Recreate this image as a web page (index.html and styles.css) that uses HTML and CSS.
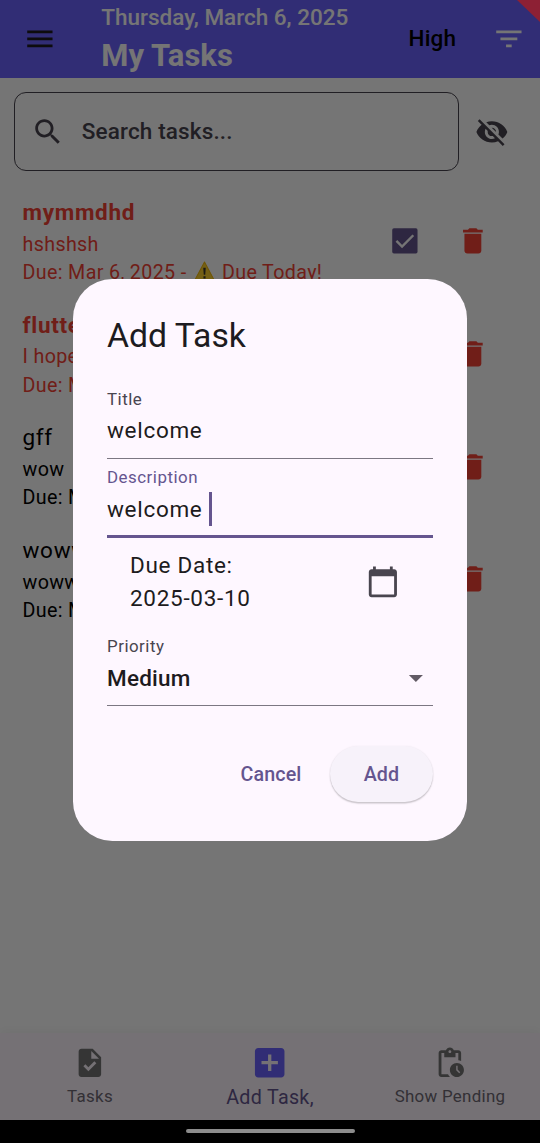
FILE: index.html
```html
<!DOCTYPE html>
<html lang="en">
<head>
<meta charset="utf-8">
<title>My Tasks</title>
<link rel="stylesheet" href="styles.css">
</head>
<body>
<svg class="defs" width="0" height="0">
  <symbol id="trash" viewBox="0 0 24 24"><path d="M6 19c0 1.1.9 2 2 2h8c1.1 0 2-.9 2-2V7H6v12zM19 4h-3.500l-1-1h-5l-1 1H5v2h14V4z"/></symbol>
</svg>
<div class="screen">
  <header class="appbar">
    <svg class="icon menu" viewBox="0 0 24 24"><path d="M3 18h18v-2H3v2zm0-5h18v-2H3v2zm0-7v2h18V6H3z"/></svg>
    <div class="heading">
      <div class="date">Thursday, March 6, 2025</div>
      <h1 class="app-title">My Tasks</h1>
    </div>
    <span class="filter-label">High</span>
    <svg class="icon filter" viewBox="0 0 24 24"><path d="M10 18h4v-2h-4v2zM3 6v2h18V6H3zm3 7h12v-2H6v2z"/></svg>
  </header>
  <div class="search-row">
    <div class="search">
      <svg class="icon" viewBox="0 0 24 24"><path d="M15.500 14h-.79l-.28-.27C15.410 12.590 16 11.110 16 9.500 16 5.910 13.090 3 9.500 3S3 5.910 3 9.500 5.910 16 9.500 16c1.610 0 3.090-.59 4.230-1.570l.27.28v.79l5 4.990L20.490 19l-4.990-5zm-6 0C7.010 14 5 11.990 5 9.500S7.010 5 9.500 5 14 7.010 14 9.500 11.990 14 9.500 14z"/></svg>
      <span>Search tasks...</span>
    </div>
    <svg class="icon" viewBox="0 0 24 24"><path d="M12 7c2.760 0 5 2.240 5 5 0 .65-.13 1.260-.36 1.830l2.920 2.920c1.510-1.260 2.700-2.890 3.430-4.750-1.730-4.390-6-7.500-11-7.500-1.400 0-2.740.25-3.980.7l2.160 2.160C10.740 7.130 11.350 7 12 7zM2 4.270l2.280 2.280.46.46C3.080 8.300 1.780 10.020 1 12c1.730 4.390 6 7.500 11 7.500 1.550 0 3.030-.3 4.380-.84l.42.42L19.730 22 21 20.730 3.270 3 2 4.270zM7.530 9.800l1.550 1.550c-.05.21-.08.43-.08.65 0 1.660 1.340 3 3 3 .22 0 .44-.03.65-.08l1.550 1.550c-.67.33-1.410.53-2.200.53-2.760 0-5-2.240-5-5 0-.79.2-1.530.53-2.200zm4.310-.78l3.150 3.150.02-.16c0-1.660-1.340-3-3-3l-.17.01z"/></svg>
  </div>
  <main class="tasks">
    <article class="task due">
      <div class="task-text">
        <h2>mymmdhd</h2>
        <p>hshshsh</p>
        <p>Due: Mar 6, 2025 - <svg class="warning" viewBox="0 0 20 20"><path d="M10 1 19.500 18.800H.5z" fill="#fdd12f" stroke="#f2b90c" stroke-linejoin="round"/><path d="M8.800 6.500h2.400l-.5 6.500H9.300zM9 14.500h2v2.200H9z" fill="#3c382c"/></svg> Due Today!</p>
      </div>
      <svg class="icon check" viewBox="0 0 24 24"><rect x="3" y="3" width="18" height="18" rx="1.200" fill="#65558f"/><path d="M6 12l4 4 8-8" fill="none" stroke="#fff" stroke-width="1.700"/></svg>
      <svg class="icon trash"><use href="#trash"/></svg>
    </article>
    <article class="task due">
      <div class="task-text"><h2>flutte</h2><p>I hope</p><p>Due: M</p></div>
      <svg class="icon trash"><use href="#trash"/></svg>
    </article>
    <article class="task">
      <div class="task-text"><h2>gff</h2><p>wow</p><p>Due: M</p></div>
      <svg class="icon trash"><use href="#trash"/></svg>
    </article>
    <article class="task">
      <div class="task-text"><h2>woww</h2><p>woww</p><p>Due: M</p></div>
      <svg class="icon trash"><use href="#trash"/></svg>
    </article>
  </main>
  <nav class="tabs">
    <div class="tab">
      <svg class="icon" viewBox="0 0 24 24"><path d="M14 2H6c-1.100 0-1.990.9-1.990 2L4 20c0 1.100.89 2 1.990 2H18c1.100 0 2-.9 2-2V8l-6-6zm-3.060 16L7.400 14.460l1.410-1.410 2.120 2.120 4.240-4.240 1.410 1.410L10.940 18zM13 9V3.500L18.500 9H13z"/></svg>
      <span>Tasks</span>
    </div>
    <div class="tab active">
      <svg class="icon" viewBox="0 0 24 24"><path d="M19 3H5c-1.110 0-2 .9-2 2v14c0 1.100.89 2 2 2h14c1.100 0 2-.9 2-2V5c0-1.100-.9-2-2-2zm-2 10h-4v4h-2v-4H7v-2h4V7h2v4h4v2z"/></svg>
      <span>Add Task,</span>
    </div>
    <div class="tab">
      <svg class="icon" viewBox="0 0 24 24"><path d="M17 12c-2.760 0-5 2.240-5 5s2.240 5 5 5 5-2.240 5-5-2.240-5-5-5zm1.650 7.350L16.500 17.200V14h1v2.790l1.850 1.850-.7.71zM18 3h-3.180C14.400 1.840 13.300 1 12 1s-2.400.84-2.820 2H6c-1.100 0-2 .9-2 2v15c0 1.100.9 2 2 2h6.110c-.59-.57-1.070-1.250-1.420-2H6V5h2v3h8V5h2v5.080c.71.1 1.380.31 2 .6V5c0-1.100-.9-2-2-2zm-6 2c-.55 0-1-.45-1-1s.45-1 1-1 1 .45 1 1-.45 1-1 1z"/></svg>
      <span>Show Pending</span>
    </div>
  </nav>
  <div class="system-bar"></div>
  <div class="scrim">
    <section class="dialog">
      <h2 class="dialog-title">Add Task</h2>
      <div class="field"><label>Title</label><div class="value">welcome</div></div>
      <div class="field focused"><label>Description</label><div class="value">welcome <i class="caret"></i></div></div>
      <div class="date-row">
        <div>Due Date:<br>2025-03-10</div>
        <svg class="icon" viewBox="0 0 24 24"><path d="M20 3h-1V1h-2v2H7V1H5v2H4c-1.100 0-2 .9-2 2v16c0 1.100.9 2 2 2h16c1.100 0 2-.9 2-2V5c0-1.100-.9-2-2-2zm0 18H4V8h16v13z"/></svg>
      </div>
      <div class="field select">
        <label>Priority</label>
        <div class="value">Medium<svg class="icon" viewBox="0 0 24 24"><path d="M7 10l5 5 5-5z"/></svg></div>
      </div>
      <div class="actions"><button class="btn">Cancel</button><button class="btn raised">Add</button></div>
    </section>
  </div>
  <div class="ribbon"></div>
  <div class="handle"></div>
</div>
</body>
</html>
```
FILE: styles.css
```css
* { box-sizing: border-box; margin: 0; }
body { font-family: Roboto, sans-serif; background: #fff; color: #000; }
.defs { position: absolute; }
.screen { position: relative; width: 540px; height: 1143px; overflow: hidden; display: flex; flex-direction: column; }
.icon { width: 33.75px; height: 33.75px; flex: none; display: block; fill: currentColor; }

.appbar { height: 78px; flex: none; background: #6c63ff; display: flex; align-items: center; padding: 0 14px 0 22.500px; }
.menu { color: #1d1b20; }
.heading { margin-left: 45px; flex: 1; color: #fff; white-space: nowrap; }
.date { font-size: 22.500px; font-weight: 500; line-height: 33px; margin-top: -1px; }
.app-title { font-size: 31px; font-weight: 700; line-height: 40px; margin-top: 2px; }
.filter-label { font-size: 22.500px; font-weight: 500; letter-spacing: .2px; margin: 0 36px 2px 0; }
.filter { color: #fff; }

.search-row { display: flex; align-items: center; padding: 14px 31px 14px 14px; justify-content: space-between; color: #49454f; }
.search { width: 444.500px; height: 79px; border: 1.400px solid #49454f; border-radius: 12px; display: flex; align-items: center; padding-left: 16px; gap: 17px; font-size: 22.500px; font-weight: 500; letter-spacing: .15px; }
.search span { margin-bottom: 2px; }

.tasks { flex: 1; }
.task { height: 112.600px; display: flex; align-items: center; padding: 0 50.500px 0 22.500px; letter-spacing: .7px; }
.task-text { flex: 1; white-space: nowrap; }
.task h2 { font-size: 22.500px; font-weight: 400; line-height: 33.750px; }
.task p { font-size: 19.700px; line-height: 28.100px; letter-spacing: .35px; }
.task h2 + p { margin-top: 1px; }
.task + .task .task-text { padding-top: .6px; }
.task.due { color: #f44336; }
.task.due h2 { font-weight: 700; }
.trash { color: #f44336; }
.check { margin-right: 34px; }
.warning { width: 21px; height: 21px; vertical-align: -3px; margin: 0 2px; }

.tabs { height: 87px; flex: none; background: #fef7ff; display: flex; box-shadow: 0 -3px 10px rgba(0,0,0,.04); }
.tab { flex: 1; display: flex; flex-direction: column; align-items: center; padding-top: 13px; color: #757575; font-size: 16.900px; letter-spacing: .3px; }
.tab span { line-height: 24px; margin-top: 4.500px; color: #6f6975; }
.tab.active { padding-top: 10px; color: #6c63ff; font-size: 19.700px; }
.tab.active .icon { width: 39.400px; height: 39.400px; }
.tab.active span { color: #65558f; margin-top: 3.500px; }
.system-bar { height: 23px; flex: none; background: #000; position: relative; }
.handle { position: absolute; left: 185.500px; bottom: 10px; width: 169px; height: 4px; border-radius: 2px; background: #8c8c8c; }

.scrim { position: absolute; inset: 0; background: rgba(0,0,0,.54); display: flex; justify-content: center; align-items: flex-start; padding-top: 278.500px; }
.dialog { width: 394px; height: 562.500px; padding: 34px; border-radius: 39.400px; background: #fef7ff; color: #1d1b20; }
.dialog-title { font-size: 33.750px; font-weight: 400; line-height: 45px; margin-bottom: 22.500px; }
.field { height: 78.750px; padding-top: 10px; border-bottom: 1.400px solid #7c7782; }
.field label { display: block; font-size: 16.900px; line-height: 19px; letter-spacing: .5px; color: #49454f; }
.value { display: flex; align-items: center; height: 34px; margin-top: 4px; font-size: 22.500px; letter-spacing: .7px; white-space: pre; }
.focused { height: 78.750px; padding-top: 9px; border-bottom: 3px solid #65558f; }
.focused .value { margin-top: 5px; }
.focused label { color: #65558f; }
.caret { width: 3px; height: 34px; background: #65558f; }
.date-row { height: 89.500px; padding: 0 33px 0 23px; display: flex; align-items: center; justify-content: space-between; font-size: 22.500px; line-height: 33.750px; letter-spacing: .7px; }
.date-row .icon { color: #49454f; }
.select { height: 78.750px; padding-top: 9.500px; }
.select .value { justify-content: space-between; font-weight: 500; letter-spacing: .2px; margin-top: 5px; }
.select .value .icon { color: #625b65; }
.actions { margin-top: 39.750px; display: flex; justify-content: flex-end; gap: 11.500px; }
.btn { height: 56px; padding: 2px 17px 0; border: 0; background: none; color: #65558f; font-family: inherit; font-size: 19.700px; font-weight: 500; letter-spacing: .1px; }
.raised { padding: 2px 33.750px 0; border-radius: 28px; background: #f7f2fa; box-shadow: 0 1.500px 1.500px rgba(0,0,0,.2), 0 0 2px rgba(0,0,0,.06); }

.ribbon { position: absolute; top: 0; right: 0; width: 23px; height: 22px; background: #8d2034; clip-path: polygon(0 0, 100% 0, 100% 100%); }
```
